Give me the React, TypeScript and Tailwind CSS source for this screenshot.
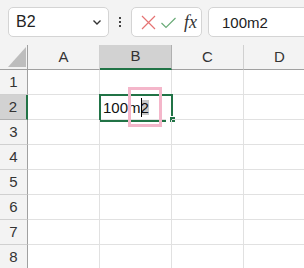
import React from "react";

const cols = ["A", "B", "C", "D"];
const rows = [1, 2, 3, 4, 5, 6, 7, 8];

export default function App() {
  return (
    <div
      className="relative w-[304px] h-[268px] overflow-hidden bg-white text-[#222]"
      style={{ fontFamily: '"Liberation Sans", "Noto Sans CJK JP", sans-serif' }}
    >
      {/* toolbar */}
      <div className="h-[45px] bg-[#f3f3f3] flex items-center pl-[8px] pb-[1px] overflow-hidden">
        <div className="shrink-0 w-[101px] h-[30px] bg-white border border-[#d4d4d4] rounded-[5px] flex items-center pl-[7px] pr-[5px] justify-between">
          <span className="text-[16px] leading-none">B2</span>
          <svg width="12" height="12" viewBox="0 0 12 12" fill="none">
            <path d="M2.5 4.5 L6 8 L9.5 4.5" stroke="#333" strokeWidth="1.4" />
          </svg>
        </div>
        <div className="shrink-0 w-[22px] flex flex-col items-center gap-[2px]">
          <div className="w-[2px] h-[2px] bg-[#444]" />
          <div className="w-[2px] h-[2px] bg-[#444]" />
          <div className="w-[2px] h-[2px] bg-[#444]" />
        </div>
        <div className="shrink-0 w-[71px] h-[30px] bg-white border border-[#d4d4d4] rounded-[5px] flex items-center pl-[9px] gap-[5px]">
          <svg width="15" height="15" viewBox="0 0 15 15" fill="none">
            <path d="M1 1 L14 14 M14 1 L1 14" stroke="#e57373" strokeWidth="1.2" />
          </svg>
          <svg width="15" height="15" viewBox="0 0 15 15" fill="none">
            <path d="M0.5 8 L5 12.5 L14.5 3" stroke="#6aab78" strokeWidth="1.2" />
          </svg>
          <span
            className="text-[18px] italic leading-none text-[#333] ml-[3px]"
            style={{ fontFamily: '"Liberation Serif", serif' }}
          >
            fx
          </span>
        </div>
        <div className="shrink-0 ml-[6px] w-[110px] h-[30px] bg-white border border-[#d4d4d4] rounded-[5px] flex items-center pl-[13px]">
          <span className="text-[15px] leading-none">100m2</span>
        </div>
      </div>

      {/* grid */}
      <div className="grid grid-cols-[28px_72px_72px_72px_72px]">
        {/* header row */}
        <div className="h-[25px] bg-[#f3f3f3] border-r border-b border-[#a0a0a0] relative">
          <svg className="absolute left-[8px] top-[2px]" width="18" height="20" viewBox="0 0 18 20">
            <path d="M18 0 L18 20 L0 20 Z" fill="#bdbdbd" />
          </svg>
        </div>
        {cols.map((c) => (
          <div
            key={c}
            className={
              c === "B"
                ? "h-[25px] bg-[#d2d2d2] border-r border-[#b0b0b0] border-b-2 border-b-[#217346] flex items-center justify-center text-[15px] text-[#333]"
                : "h-[25px] bg-[#f3f3f3] border-r border-[#d0d0d0] border-b border-b-[#a0a0a0] flex items-center justify-center text-[15px] text-[#333]"
            }
          >
            {c}
          </div>
        ))}
        {rows.map((r) => (
          <React.Fragment key={r}>
            <div
              className={
                r === 2
                  ? "h-[25px] bg-[#d2d2d2] border-r-2 border-r-[#217346] border-b border-b-[#b0b0b0] flex items-center justify-center text-[15px] text-[#333]"
                  : "h-[25px] bg-[#f3f3f3] border-r border-r-[#a0a0a0] border-b border-b-[#d0d0d0] flex items-center justify-center text-[15px] text-[#333]"
              }
            >
              {r}
            </div>
            {cols.map((c) => (
              <div
                key={c}
                className="h-[25px] border-r border-b border-[#e1e1e1] relative"
              >
                {r === 2 && c === "B" && (
                  <>
                    <div className="absolute left-[-1px] top-[-1px] w-[74px] h-[28px] border-2 border-[#217346]" />
                    <div className="absolute left-[66px] top-[24px] w-[4px] h-[3px] bg-white" />
                    <div className="absolute left-[69px] top-[21px] w-[7px] h-[7px] bg-[#217346] border border-white" />
                    <div className="absolute left-[3px] top-0 h-[24px] flex items-center text-[15px] leading-none text-[#111]">
                      <span>100m</span>
                      <span className="relative bg-[#c8c8c8]">
                        <span className="absolute left-0 top-[-2px] w-[1px] h-[19px] bg-black" />
                        2
                      </span>
                    </div>
                  </>
                )}
              </div>
            ))}
          </React.Fragment>
        ))}
      </div>

      {/* pink highlight */}
      <div className="absolute left-[128px] top-[87px] w-[34px] h-[40px] border-[3px] border-[#f4b6ca]" />
    </div>
  );
}
